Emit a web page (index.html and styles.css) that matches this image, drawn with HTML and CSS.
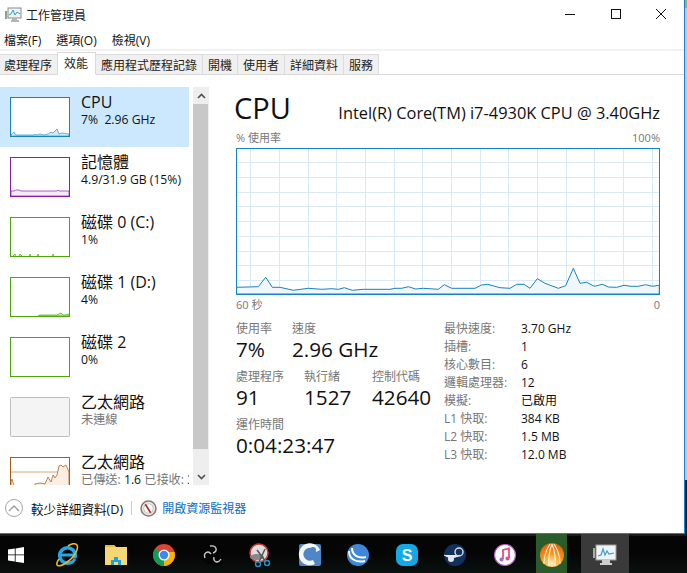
FILE: index.html
```html
<!DOCTYPE html>
<html lang="zh-Hant">
<head>
<meta charset="utf-8">
<title>工作管理員</title>
<link rel="stylesheet" href="styles.css">
</head>
<body>
<div class="window">
  <header class="titlebar">
    <svg class="appicon" viewBox="0 0 18 16" width="18" height="16"><rect x="4" y="1" width="13" height="10" fill="#eef3f6" stroke="#8a8a8a"/><path d="M5 8l2-1 2-4 2 5 2-3 3 2" fill="none" stroke="#2b9ad6"/><path d="M8 11h5v2h2v2H7v-2h1z" fill="#b5b5b5"/><rect x="1" y="4" width="2" height="8" fill="#9a9a9a"/><rect x="1" y="4" width="2" height="2" fill="#6cbf4b"/></svg>
    <span class="title">工作管理員</span>
    <div class="winbtns">
      <svg width="12" height="12" viewBox="0 0 12 12"><path d="M1 6.500h10" stroke="#111" fill="none"/></svg>
      <svg width="12" height="12" viewBox="0 0 12 12"><rect x="1.500" y="1.500" width="9" height="9" stroke="#111" fill="none"/></svg>
      <svg width="12" height="12" viewBox="0 0 12 12"><path d="M1 1l10 10M11 1L1 11" stroke="#111" fill="none"/></svg>
    </div>
  </header>
  <nav class="menubar"><span>檔案(F)</span><span>選項(O)</span><span>檢視(V)</span></nav>
  <div class="tabs">
    <span class="tab first">處理程序</span><span class="tab active">效能</span><span class="tab">應用程式歷程記錄</span><span class="tab">開機</span><span class="tab">使用者</span><span class="tab">詳細資料</span><span class="tab">服務</span>
  </div>
  <main class="content">
    <aside class="side">
      <div class="list">
        <div class="item selected">
          <svg class="thumb" viewBox="0 0 60 40"><rect class="tb-blue" x=".5" y=".5" width="59" height="39"/><path d="M1 39V38L3 36 4 35 5 37 6 38H24L25 37 26 38 30 37 34 38 38 37 41 35 43 36 47 32 49 37 52 36 59 37V39Z" fill="#d5e8f4" stroke="#1583bf" stroke-width=".6"/></svg>
          <div class="info"><div class="name">CPU</div><div class="sub">7%&nbsp; 2.96 GHz</div></div>
        </div>
        <div class="item">
          <svg class="thumb" viewBox="0 0 60 40"><rect class="tb-purple" x=".5" y=".5" width="59" height="39"/><path d="M1 34H4L6 33H9L11 34H47L48 33 49 34H59V39H1Z" fill="#f3edf6" stroke="#8b1ea8" stroke-width=".7"/></svg>
          <div class="info"><div class="name">記憶體</div><div class="sub">4.9/31.9 GB (15%)</div></div>
        </div>
        <div class="item">
          <svg class="thumb" viewBox="0 0 60 40"><rect class="tb-green" x=".5" y=".5" width="59" height="39"/><path d="M3 39L5 37 6 39M9 39L10 37 12 39M19 39L20 37 21 39M27 39L28 37 29 39M42 39L43 37 44 39" fill="#cfe6b8" stroke="#4da60c" stroke-width=".7"/></svg>
          <div class="info"><div class="name">磁碟 0 (C:)</div><div class="sub">1%</div></div>
        </div>
        <div class="item">
          <svg class="thumb" viewBox="0 0 60 40"><rect class="tb-green" x=".5" y=".5" width="59" height="39"/><path d="M28 39L30 38 34 38 38 38 42 38 47 38 51 36 53 38 55 38 59 37V39Z" fill="#cfe6b8" stroke="#4da60c" stroke-width=".7"/></svg>
          <div class="info"><div class="name">磁碟 1 (D:)</div><div class="sub">4%</div></div>
        </div>
        <div class="item">
          <svg class="thumb" viewBox="0 0 60 40"><rect class="tb-green" x=".5" y=".5" width="59" height="39"/></svg>
          <div class="info"><div class="name">磁碟 2</div><div class="sub">0%</div></div>
        </div>
        <div class="item">
          <svg class="thumb" viewBox="0 0 60 40"><rect class="tb-off" x=".5" y=".5" width="59" height="39" rx="1"/></svg>
          <div class="info"><div class="name">乙太網路</div><div class="sub muted">未連線</div></div>
        </div>
        <div class="item last">
          <svg class="thumb" viewBox="0 0 60 40"><rect class="tb-brown" x=".5" y=".5" width="59" height="39"/><path d="M1 15H59" stroke="#c98d58" stroke-width=".8"/><path d="M1 40V25L2 22 3 26 4 28 5 40ZM20 40L25 27 30 26 35 27 38 20 41 25 43 18 45 21 47 18 49 9 51 8 53 10 56 8 59 15V40Z" fill="#fbeee2" stroke="#b5651d" stroke-width=".8"/></svg>
          <div class="info"><div class="name">乙太網路</div><div class="sub clip"><span class="muted">已傳送:</span> 1.6 <span class="muted">已接收:</span> 3.2 Mbps</div></div>
        </div>
      </div>
      <div class="scrollbar">
        <div class="arrow"><svg width="9" height="6" viewBox="0 0 9 6"><path d="M1 5l3.500-3.500L8 5" fill="none" stroke="#505050" stroke-width="1.600"/></svg></div>
        <div class="track"><div class="thumb-bar"></div></div>
        <div class="arrow"><svg width="9" height="6" viewBox="0 0 9 6"><path d="M1 1l3.500 3.500L8 1" fill="none" stroke="#505050" stroke-width="1.600"/></svg></div>
      </div>
    </aside>
    <section class="detail">
      <div class="head"><h1>CPU</h1><div class="model">Intel(R) Core(TM) i7-4930K CPU @ 3.40GHz</div></div>
      <div class="axis top"><span>% 使用率</span><span>100%</span></div>
      <svg class="chart" width="424" height="147" viewBox="0 0 424 147">
        <rect width="424" height="147" fill="#fff"/>
        <path class="grid" d="M0 14.500H423M0 29.500H423M0 44.500H423M0 58.500H423M0 73.500H423M0 88.500H423M0 103.500H423M0 117.500H423M0 132.500H423M14.500 0V147M43.500 0V147M72.500 0V147M100.500 0V147M129.500 0V147M158.500 0V147M186.500 0V147M215.500 0V147M244.500 0V147M272.500 0V147M301.500 0V147M330.500 0V147M358.500 0V147M387.500 0V147M416.500 0V147"/>
        <path class="line" d="M0 146V139.300L22.300 138.700 29.700 129.300 36.300 139.300 44 139.300 57.300 142.300 72.300 140.300 85.700 141.300 95.700 140.700 102.300 141.300 108.300 139.700 116.300 142.300 127.300 141.300 154 141.300 159 140.300 165.700 140.300 172.300 138.700 179.700 141 187.300 140.300 202.300 141.300 208.300 136.700 215.700 140.300 239 140.300 245.700 137 251.700 136.300 264 139.700 274 140.300 280.700 136.300 288 136.300 294 140.300 301.300 130.700 309 135.300 322.300 140.300 329.700 137.700 337.300 120.300 344 135.300 350.700 134.300 358.300 138.300 366.300 136.300 372.300 139 380.700 139.300 388 137.300 395 138.300 402.300 138.300 409.700 136.700 416.300 138.300 423.300 137.300V146Z"/>
        <rect class="frame" x=".5" y=".5" width="423" height="146"/>
      </svg>
      <div class="axis bottom"><span>60 秒</span><span>0</span></div>
      <div class="stats">
        <div class="left">
          <div class="row">
            <div class="stat s1"><label>使用率</label><b>7%</b></div>
            <div class="stat"><label>速度</label><b>2.96 GHz</b></div>
          </div>
          <div class="row">
            <div class="stat s2"><label>處理程序</label><b>91</b></div>
            <div class="stat s3"><label>執行緒</label><b>1527</b></div>
            <div class="stat"><label>控制代碼</label><b>42640</b></div>
          </div>
          <div class="row"><div class="stat"><label>運作時間</label><b>0:04:23:47</b></div></div>
        </div>
        <dl class="props">
          <dt>最快速度:</dt><dd>3.70 GHz</dd>
          <dt>插槽:</dt><dd>1</dd>
          <dt>核心數目:</dt><dd>6</dd>
          <dt>邏輯處理器:</dt><dd>12</dd>
          <dt>模擬:</dt><dd>已啟用</dd>
          <dt>L1 快取:</dt><dd>384 KB</dd>
          <dt>L2 快取:</dt><dd>1.5 MB</dd>
          <dt>L3 快取:</dt><dd>12.0 MB</dd>
        </dl>
      </div>
    </section>
  </main>
  <footer class="footer">
    <span class="circle"><svg width="12" height="8" viewBox="0 0 12 8"><path d="M1 7l5-5 5 5" fill="none" stroke="#9a9a9a" stroke-width="1.400"/></svg></span>
    <span class="less">較少詳細資料(D)</span>
    <span class="sep"></span>
    <svg class="resmon" width="17" height="17" viewBox="0 0 16 16"><circle cx="8" cy="8" r="7" fill="#eee" stroke="#8a7a70" stroke-width="1.500"/><circle cx="8" cy="8" r="4.500" fill="#fff" stroke="#c9c0b8"/><path d="M5 4l5 8" stroke="#b3261e" stroke-width="1.500"/></svg>
    <a class="link">開啟資源監視器</a>
  </footer>
</div>
<div class="taskbar">
  <div class="start"><svg width="16" height="16" viewBox="0 0 16 16"><path d="M0 2.500L6.800 1.500V7.500H0ZM7.600 1.400L16 0V7.500H7.600ZM0 8.300H6.800V14.500L0 13.500ZM7.600 8.300H16V16L7.600 14.700Z" fill="#fff"/></svg></div>
  <div class="tb"><svg width="24" height="24" viewBox="0 0 24 24"><circle cx="12.500" cy="12.500" r="7.800" fill="none" stroke="#27a6e5" stroke-width="3.600"/><path d="M5 12H20" fill="none" stroke="#27a6e5" stroke-width="3"/><path d="M16 15.500h6V20H14z" fill="#0a0a0a"/><path d="M20 16C18 20 13 21 9 19" fill="none" stroke="#27a6e5" stroke-width="3"/><path d="M4 16C-1 23 3 25 11 20S24 6 22 2C20 0 16 1 13 3" fill="none" stroke="#f2b51d" stroke-width="1.600"/></svg></div>
  <div class="tb"><svg width="24" height="24" viewBox="0 0 24 24"><path d="M1 2h9l2 2h11v18H1z" fill="#f7d774"/><path d="M1 2h9l2 2H1z" fill="#e8b93f"/><path d="M7 22v-5h3v-3h4v3h3v5z" fill="#18a3e0"/><path d="M10 22v-3h4v3z" fill="#f7d774"/></svg></div>
  <div class="tb"><svg width="24" height="24" viewBox="0 0 24 24"><circle cx="12" cy="12" r="11" fill="#db4437"/><path d="M12 12L2.500 17.500A11 11 0 0 1 3 6z" fill="#0f9d58"/><path d="M12 23A11 11 0 0 0 22.500 9H12z" fill="#f4b400"/><path d="M12 23A11 11 0 0 1 2.500 17.500L12 12z" fill="#0f9d58"/><circle cx="12" cy="12" r="5.500" fill="#fff"/><circle cx="12" cy="12" r="4.200" fill="#4285f4"/></svg></div>
  <div class="tb"><svg width="24" height="24" viewBox="0 0 24 24"><circle cx="12" cy="12" r="11" fill="#050505"/><path d="M9 3C16 2 17 8 12 10M20 16C17 21 12 19 13 14M4 15C2 10 7 7 10 11" fill="none" stroke="#c8c8c8" stroke-width="1.400"/></svg></div>
  <div class="tb"><svg width="24" height="24" viewBox="0 0 24 24"><circle cx="10" cy="10" r="9" fill="#ddd" stroke="#c23a3a" stroke-width="1.500"/><ellipse cx="8" cy="14" rx="7" ry="3" fill="#888"/><path d="M8 7l9 12M16 6L10 19" stroke="#555" stroke-width="1.500"/><circle cx="18" cy="20" r="2.500" fill="none" stroke="#2a8fc5" stroke-width="1.500"/><circle cx="9" cy="21" r="2.500" fill="none" stroke="#2a8fc5" stroke-width="1.500"/></svg></div>
  <div class="tb"><svg width="24" height="24" viewBox="0 0 24 24"><rect x="1" y="1" width="22" height="22" rx="2" fill="#4f86c6"/><path d="M22 7A11 11 0 1 0 17 21L15 17A6.500 6.500 0 1 1 18 9Z" fill="#f4f6f8"/><circle cx="15" cy="7" r="3" fill="#4f86c6"/></svg></div>
  <div class="tb"><svg width="24" height="24" viewBox="0 0 24 24"><circle cx="12" cy="12" r="11" fill="#3f87d8"/><path d="M3 8C3 16 10 20 19 18M6 5C6 12 12 16 20 14" fill="none" stroke="#fff" stroke-width="2"/></svg></div>
  <div class="tb"><svg width="24" height="24" viewBox="0 0 24 24"><rect x="1" y="1" width="22" height="22" rx="7" fill="#13a9e6"/><text x="12" y="18" class="sky">S</text></svg></div>
  <div class="tb"><svg width="24" height="24" viewBox="0 0 24 24"><circle cx="12" cy="12" r="11" fill="#12305c"/><path d="M1 12L9 16C12 13 16 14 17 12" fill="#eee" stroke="#eee"/><circle cx="16" cy="9" r="4" fill="none" stroke="#cfd8e3" stroke-width="1.500"/><circle cx="8" cy="16" r="3" fill="#dfe6ee"/></svg></div>
  <div class="tb itunes"><svg width="24" height="24" viewBox="0 0 24 24"><circle cx="12" cy="12" r="10.500" fill="#fff" stroke="#b05cc4" stroke-width="1.200"/><path d="M10 16V7l6-1.500V15" fill="none" stroke="#f0487a" stroke-width="1.800"/><circle cx="8.500" cy="16.500" r="2" fill="#8d6de0"/><circle cx="14.500" cy="15.500" r="2" fill="#e0508c"/></svg></div>
  <div class="tb green"><svg width="24" height="24" viewBox="0 0 24 24"><defs><radialGradient id="bc" cx=".5" cy=".85" r=".8"><stop offset="0" stop-color="#fff0c0"/><stop offset=".5" stop-color="#f59a20"/><stop offset="1" stop-color="#e2640f"/></radialGradient></defs><circle cx="12" cy="12" r="12" fill="url(#bc)"/><path d="M4 21C4 10 8 4 10 1M9 23C8 12 10 6 12 1M15 23C16 12 14 6 12 1M20 21C20 10 16 4 14 1" fill="none" stroke="#fff3d6" stroke-width="1.100"/></svg></div>
  <div class="tb active-app"><svg width="24" height="24" viewBox="0 0 24 24"><rect x="3" y="2" width="20" height="15" fill="#eef3f6" stroke="#9a9a9a"/><path d="M5 13l3-1 2-6 2 6 2-4 2 3 5-1" fill="none" stroke="#3d9bd9" stroke-width="1.200"/><path d="M9 17h8v3h2v2H7v-2h2z" fill="#cfcfcf"/><rect y="5" width="2" height="10" fill="#aaa"/><rect y="5" width="2" height="2" fill="#7ac25c"/></svg></div>
</div>
</body>
</html>
```
FILE: styles.css
```css
* { box-sizing: border-box; }
html, body { margin: 0; padding: 0; }
body {
  width: 687px; height: 573px; overflow: hidden;
  background: linear-gradient(#8fb86a 0 8px, #c9c9c9 8px 480px, #1c1c1c 480px);
  font-family: "Open Sans", "Noto Sans CJK TC", sans-serif;
  color: #111; display: flex; flex-direction: column;
}
.window {
  height: 534px; width: 685px; background: #fff; display: flex; flex-direction: column;
  border-right: 1px solid #1583d8; border-bottom: 1px solid #1583d8; flex: none;
}
.titlebar { height: 30px; display: flex; align-items: center; padding-left: 4px; flex: none; }
.appicon { flex: none; }
.title { margin-left: 4px; font-size: 12px; color: #222; }
.winbtns { margin-left: auto; margin-top: -2px; display: flex; gap: 33.500px; padding-right: 17px; }
.menubar { height: 19px; display: flex; gap: 15px; padding-left: 4px; font-size: 12px; align-items: center; flex: none; }
.tabs { height: 26px; flex: none; display: flex; align-items: flex-end; background: linear-gradient(#f2f2f2 0 2px, #fff 2px); border-bottom: 1px solid #d9d9d9; }
.tab { height: 20px; font-size: 12px; line-height: 21px; padding: 0 5px; background: #f0f0f0; border: 1px solid #dcdcdc; border-left: 0; border-bottom: 0; white-space: nowrap; color: #222; }
.tab.first { margin-left: -1px; }
.tab.active { height: 23px; background: #fff; border: 1px solid #d9d9d9; border-bottom: 1px solid #fff; margin-bottom: -1px; margin-left: -1px; padding: 0 7px 0 6px; line-height: 21px; position: relative; }
.content { flex: 1; display: flex; min-height: 0; }
.side { width: 210px; flex: none; display: flex; }
.list { width: 189px; margin-top: 12px; height: 398px; overflow: hidden; flex: none; }
.item { height: 60px; display: flex; padding: 10px 0 0 10px; gap: 11px; }
.item.selected { background: #cce8ff; }
.thumb { width: 60px; height: 40px; flex: none; }
.thumb rect { fill: #fff; stroke-width: 1; }
.tb-blue { stroke: #1583bf; }
.tb-purple { stroke: #8b1ea8; }
.tb-green { stroke: #4da60c; }
.tb-brown { stroke: #a85a10; }
.thumb .tb-off { stroke: #bdbdbd; fill: #f4f4f4; }
.info { min-width: 0; flex: 1; margin-top: -6px; }
.name { font-size: 16px; line-height: 22px; white-space: nowrap; }
.sub { font-size: 12.200px; line-height: 13px; white-space: nowrap; }
.clip { overflow: hidden; width: 108px; }
.muted { color: #777; }
.scrollbar { width: 16px; margin: 12px 0 0 4px; display: flex; flex-direction: column; background: #eee; height: 398px; }
.arrow { height: 17px; display: flex; align-items: center; justify-content: center; flex: none; }
.track { flex: 1; display: flex; flex-direction: column; }
.thumb-bar { height: 345px; width: 15px; background: #c8c8c8; }
.detail { flex: 1; padding: 0 0 0 26px; min-width: 0; }
.head { display: flex; align-items: flex-end; justify-content: space-between; width: 424px; height: 40px; margin-top: 11px; }
h1 { margin: 0 0 0 -2px; font-weight: 400; font-size: 29px; line-height: 36px; }
.model { font-size: 16.400px; line-height: 24px; margin-bottom: 1px; }
.axis { width: 424px; display: flex; justify-content: space-between; font-size: 11px; color: #777; line-height: 14px; }
.axis.top { margin-top: 5px; height: 17px; }
.axis.bottom { margin-top: 3px; height: 17px; }
.chart { display: block; }
.grid { stroke: #d9eaf4; fill: none; }
.line { stroke: #1583bf; fill: #f1f6fb; stroke-width: 1; }
.frame { fill: none; stroke: #1583bf; }
.stats { display: flex; margin-top: 7px; }
.left { width: 208px; flex: none; }
.row { display: flex; height: 48px; }
.stat label { display: block; font-size: 12px; line-height: 14px; color: #777; }
.stat b { display: block; font-weight: 400; font-size: 20.700px; line-height: 27px; white-space: nowrap; }
.s1 { width: 56px; }
.s2 { width: 68px; }
.s3 { width: 68px; }
.props { margin: -2px 0 0 0; display: grid; grid-template-columns: 77px auto; grid-auto-rows: 18px; font-size: 12px; line-height: 18px; align-content: start; }
dt { color: #777; }
dd { margin: 0; }
.footer { height: 48px; flex: none; display: flex; align-items: center; padding: 0 0 2px 5px; font-size: 12px; }
.circle { width: 18px; height: 18px; border: 1px solid #a5a5a5; border-radius: 50%; display: flex; align-items: center; justify-content: center; flex: none; }
.less { margin-left: 8px; font-size: 12.600px; }
.sep { width: 1px; height: 14px; background: #ccc; margin: 0 8px; }
.resmon { flex: none; }
.link { color: #0b6cc8; margin-left: 5px; }
.taskbar { flex: 1; display: flex; align-items: stretch; background: linear-gradient(#1b1b1b 0 2px, #050505 2px 20px, #0a1210); }
.start { width: 43px; display: flex; align-items: center; padding: 3px 0 0 8px; flex: none; }
.tb { width: 48.500px; display: flex; align-items: center; justify-content: center; padding-top: 3px; flex: none; }
.tb.itunes { padding-left: 3px; }
.tb.green { width: 31px; margin-left: 8px; background: #2b5a2b; }
.tb.active-app { width: 48px; margin-left: 14px; background: #3a3a3a; }
.sky { font: 700 16px "Liberation Sans", sans-serif; fill: #fff; text-anchor: middle; }
```
